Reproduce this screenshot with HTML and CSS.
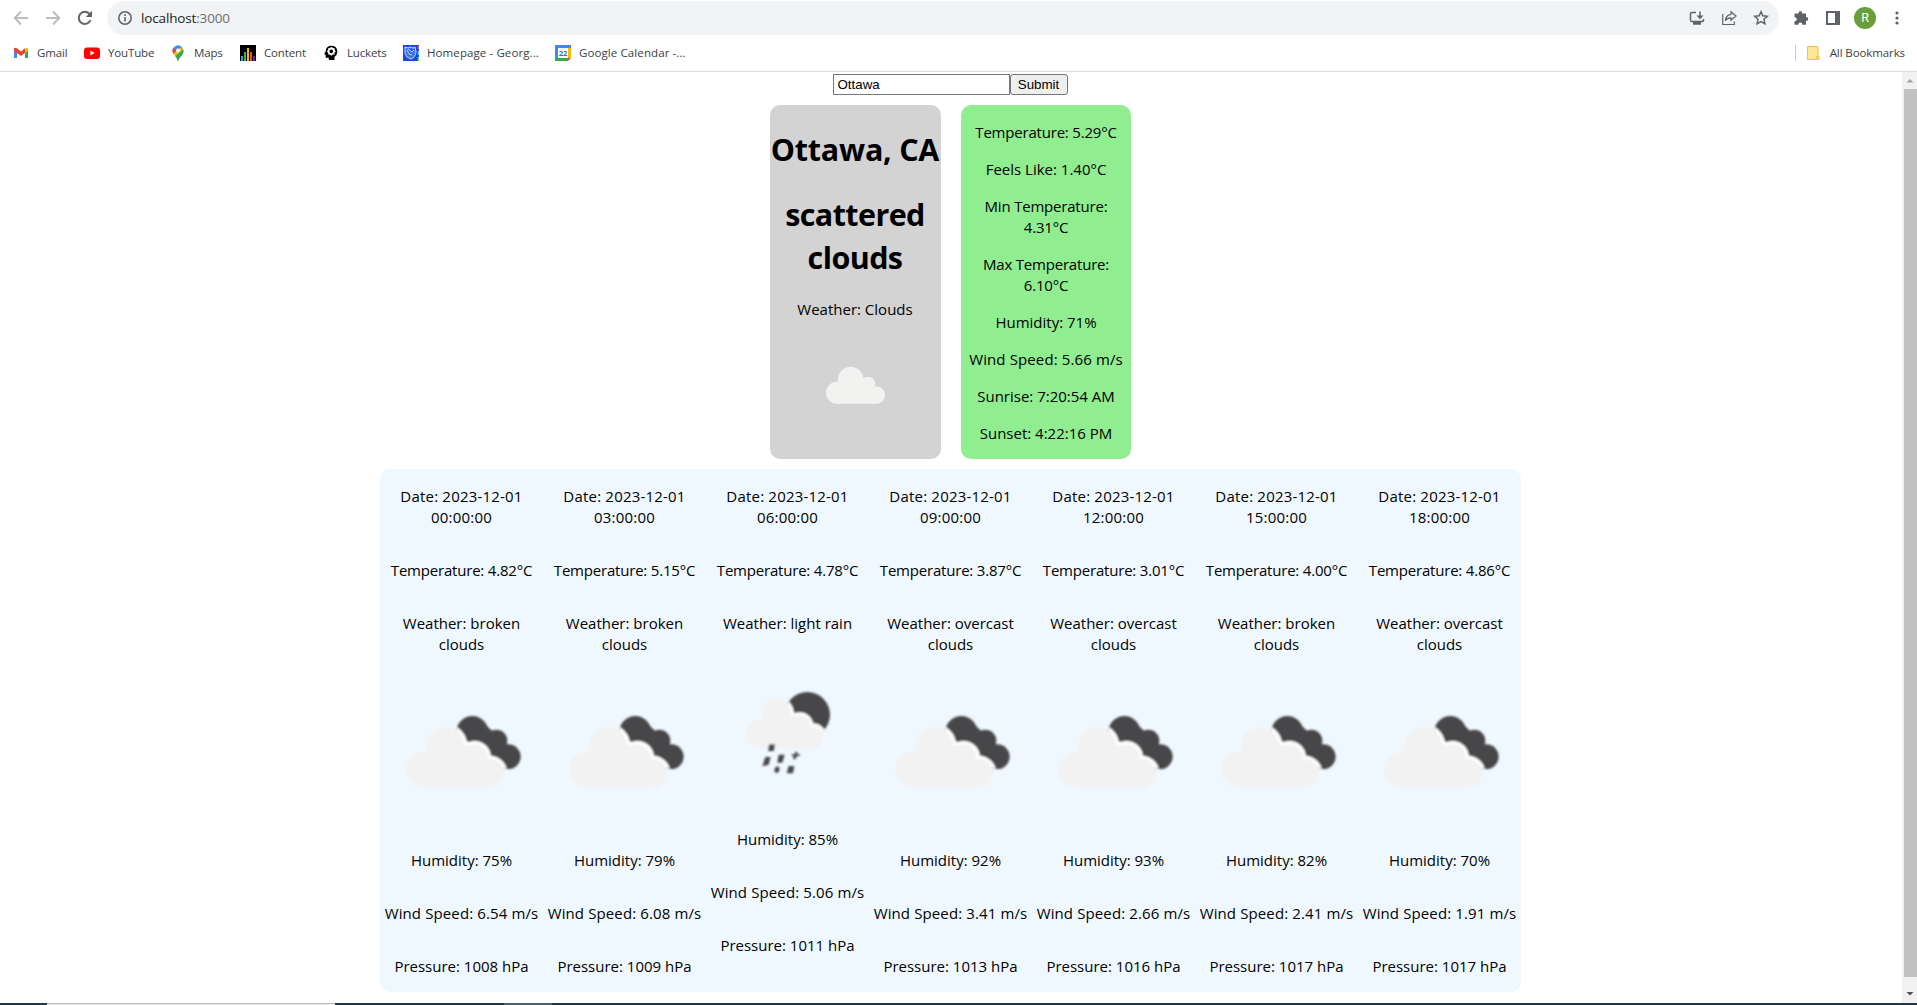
FILE: index.html
```html
<!DOCTYPE html>
<html lang="en">
<head>
<meta charset="utf-8">
<title>Weather</title>
<link rel="stylesheet" href="styles.css">
</head>
<body>
<svg class="defs" width="0" height="0" aria-hidden="true">
  <defs>
    <filter id="soft"><feGaussianBlur stdDeviation="2.800"/></filter>
    <g id="cloud-shape">
      <circle cx="225" cy="255" r="57"/><circle cx="162" cy="326" r="54"/><circle cx="314" cy="289" r="39"/><circle cx="359" cy="337" r="43"/>
      <path d="M162 272 L225 230 L314 260 L359 310 V380 H162Z"/>
    </g>
    <g id="dark-shape">
      <circle cx="307" cy="213" r="48"/><circle cx="379" cy="239" r="33"/><circle cx="415" cy="287" r="37"/>
      <path d="M262 201 L345 190 L420 260 L410 324 L350 296Z"/>
    </g>
    <clipPath id="dark-clip"><circle cx="307" cy="213" r="48"/><circle cx="379" cy="239" r="33"/><circle cx="415" cy="287" r="37"/><path d="M262 201 L345 190 L420 260 L410 324 L350 296Z"/></clipPath>
    <symbol id="broken" viewBox="30 30 489 489">
      <g filter="url(#soft)">
        <use href="#dark-shape" fill="#464648"/>
        <g clip-path="url(#dark-clip)"><use href="#cloud-shape" fill="#fff" stroke="#fff" stroke-width="20"/></g>
        <use href="#cloud-shape" fill="#f2f2f2"/>
      </g>
    </symbol>
    <clipPath id="sun-clip"><path d="M255 80H400V212H375L340 260H250Z"/></clipPath>
    <clipPath id="disc-clip"><circle cx="322" cy="161" r="68"/></clipPath>
    <g id="rain-cloud">
      <circle cx="228" cy="160" r="45"/><circle cx="178" cy="219" r="42"/><circle cx="299" cy="195" r="32"/><circle cx="338" cy="229" r="33"/>
      <path d="M178 177 L228 150 L299 170 L338 210 V262 H178Z"/>
    </g>
    <symbol id="rain" viewBox="18 -33 489 489">
      <g filter="url(#soft)">
        <circle cx="322" cy="161" r="68" fill="#464648" clip-path="url(#sun-clip)"/>
        <g clip-path="url(#disc-clip)"><use href="#rain-cloud" fill="#fff" stroke="#fff" stroke-width="18"/></g>
        <use href="#rain-cloud" fill="#f2f2f2"/>
        <path d="M207 250h18l-3 20h-18zM196 288h16l-6 23-19 5zM236 281h18l-7 24h-15zM286 272h6v8h8v5h-9l-5 10h-6v-10h-5v-5h9zM227 317h11v14l-8 6-8-7zM266 315h17l-4 22h-19z" fill="#46464a"/>
      </g>
    </symbol>
    <symbol id="scattered" viewBox="168 226 300 300">
      <g fill="#f2f2f0"><circle cx="302" cy="359" r="38"/><circle cx="261" cy="399" r="33"/><circle cx="354" cy="373" r="22"/><circle cx="379" cy="406" r="26"/><path d="M261 366H300L354 360L379 385V432H261Z"/></g>
    </symbol>
  </defs>
</svg>

<header class="browser">
  <div class="toolbar">
    <svg class="nav" viewBox="0 0 16 16"><path d="M15 8H2M8 1.500L1.700 8 8 14.500" fill="none" stroke="#babcbe" stroke-width="1.900"/></svg>
    <svg class="nav" viewBox="0 0 16 16"><path d="M1 8H14M8 1.500L14.300 8 8 14.500" fill="none" stroke="#babcbe" stroke-width="1.900"/></svg>
    <svg class="nav" viewBox="0 0 16 16"><path d="M13.500 10.200A6.100 6.100 0 1 1 12.300 3.700" fill="none" stroke="#5f6368" stroke-width="2"/><path d="M15 .8V7H8.800Z" fill="#5f6368"/></svg>
    <div class="address">
      <svg width="14" height="14" viewBox="0 0 14 14"><circle cx="7" cy="7" r="6.200" fill="none" stroke="#5f6368" stroke-width="1.500"/><path d="M7 6v4.600M7 3.300v1.600" stroke="#5f6368" stroke-width="1.600"/></svg>
      <span class="url">localhost<i>:3000</i></span>
      <span class="address-icons">
        <svg viewBox="0 0 16 16"><path d="M7 2.500H2.800Q1.500 2.500 1.500 4v6.200Q1.500 11.500 3 11.500h10.300Q14.500 11.500 14.500 10V9" fill="none" stroke="#5f6368" stroke-width="1.500"/><path d="M4 12h8v2.800H4zM10.300 1.500h1.500v4h2.700L11 9.300 7.500 5.500h2.800z" fill="#5f6368"/></svg>
        <svg viewBox="0 0 16 16"><path d="M1.700 4v10.500h11.600V11.500M10 1.800L15 6l-5 4.200V7.800Q6 7.700 4.300 10.700 5 5 10 4.300z" fill="none" stroke="#5f6368" stroke-width="1.200"/></svg>
        <svg viewBox="0 0 16 16"><path d="M8 1.800l1.800 4 4.500.5-3.300 3 .9 4.500L8 11.500l-3.900 2.300.9-4.500-3.300-3 4.500-.5z" fill="none" stroke="#5f6368" stroke-width="1.500"/></svg>
      </span>
    </div>
    <div class="actions">
      <svg viewBox="0 0 16 16" width="16" height="16"><path d="M2 3.500h3.500Q5.300 1 7.300 1t1.900 2.500H13V7q2.300 0 2.300 2T13 11v3.800H9.400Q9.400 12.500 7.400 12.500t-2 2.300H1.500V11.200q2.300-.1 2.300-2T1.500 7.200V3.500z" fill="#5f6368"/></svg>
      <svg viewBox="0 0 14 14" width="14" height="14"><path d="M0 0h14v14H0zM2 2v10h7V2z" fill="#5f6368" fill-rule="evenodd"/></svg>
      <span class="avatar">R</span>
      <svg class="menu" viewBox="0 0 4 14" width="4" height="14" fill="#5f6368"><circle cx="2" cy="2" r="1.600"/><circle cx="2" cy="7" r="1.600"/><circle cx="2" cy="12" r="1.600"/></svg>
    </div>
  </div>
  <nav class="bookmarks">
    <a class="gmail"><svg viewBox="0 0 16 16"><path d="M1 3v10h3V6z" fill="#4285f4"/><path d="M12 6v7h3V3z" fill="#34a853"/><path d="M12 3.500L14 2.500l1 1V6l-3 2z" fill="#fbbc04"/><path d="M1 3.300Q2 2 4 3.300l4 3.200 4-3.200V8l-4 3-4-3-3-2z" fill="#ea4335"/></svg><span>Gmail</span></a>
    <a class="youtube"><svg viewBox="0 0 16 16"><rect y="2.500" width="16" height="11.500" rx="3" fill="#f00"/><path d="M6.400 5.600v5L10.800 8.100z" fill="#fff"/></svg><span>YouTube</span></a>
    <a class="maps"><svg viewBox="0 0 16 16"><path d="M3.700 8.800L8 5.500l4.900-1.600Q14.500 7 12 10 9 13 8 16q-.7-2.700-2.600-4.700z" fill="#34a853"/><path d="M2.800 3.300L5.800.9Q10-1 12.700 3.500L8 9z" fill="#4285f4"/><path d="M2.800 3.100L6.500 6 3.500 9Q1.500 6 2.800 3.100z" fill="#ea4335"/><path d="M3.500 9L10 2.500l3 2.300-7.500 6.700z" fill="#fbbc04"/><path d="M9 8l4.300-3.500Q14 8 11.500 10.500 8.800 13 8 16q-.7-2.700-2.600-4.700z" fill="#34a853"/><circle cx="8" cy="5.600" r="2" fill="#fff"/></svg><span>Maps</span></a>
    <a class="content"><svg viewBox="0 0 16 16"><path d="M0 0h16v16H0z"/><path d="M1 11h2v5H1z" fill="#18a6e8"/><path d="M4 7h2v9H4z" fill="#5cab2d"/><path d="M7 3h2v13H7z" fill="#f2b90c"/><path d="M10 7h2v9h-2z" fill="#e8542a"/><path d="M13 11h2v5h-2z" fill="#6e2a8d"/></svg><span>Content</span></a>
    <a class="luckets"><svg viewBox="0 0 16 16"><path d="M8.500.7C13 .7 14.500 4 14.300 7q-.2 3-2.800 5v3H5.800v-2.300H2.700V9.900L1.200 9l1.500-2.800Q3 .7 8.500.7z"/><circle cx="8.300" cy="6.300" r="2.800" fill="none" stroke="#fff" stroke-width="1.800"/><path d="M8.300 2v1.800M8.300 9v1.700M4 6.300h1.500M11 6.300h1.700M5.300 3.300l1 1M10.400 8.400l1 1M11.300 3.300l-1 1M5.300 9.400l1-1" stroke="#fff"/></svg><span>Luckets</span></a>
    <a class="home"><svg viewBox="0 0 16 16"><path d="M0 0h16v16H0z" fill="#1648e8"/><path d="M2 2l3 1 2-1 3 1 2-1 1 5q-1 6-5 7-5-1-6-6zM4 5l2 4 3 1M5 4l4 3 2-2" fill="#6d9cff" fill-opacity=".45" stroke="#c4dcff"/><path d="M14.700 1H16v3h-1.300z" fill="#f06040"/><path d="M14.700 6H16v4h-1.300z" fill="#56d6d0"/><path d="M14.700 12H16v4h-1.300z" fill="#6ce64b"/></svg><span>Homepage - Georg...</span></a>
    <a class="calendar"><svg viewBox="0 0 16 16"><path d="M0 0h16v16H0z" fill="#4285f4"/><path d="M13 3h3v10h-3z" fill="#fbbc04"/><path d="M0 13h13v3H0z" fill="#34a853"/><path d="M13 13h3l-3 3z" fill="#ea4335"/><path d="M16 13v3h-3z" fill="#fff"/><path d="M3 3h10v10H3z" fill="#fff"/><text x="8" y="10.800" text-anchor="middle" class="cal-day">22</text></svg><span>Google Calendar -...</span></a>
    <a class="all"><svg viewBox="0 0 16 16"><path d="M1.500 1.500h10.500v9.500h1v3.500H1.500z" fill="#ffe793" stroke="#edc348"/><path d="M10.500 14.500v-3h2v3z" fill="#ffe793" stroke="#edc348" stroke-width=".8"/></svg><span>All Bookmarks</span></a>
  </nav>
</header>

<div class="viewport">
  <main class="page">
    <form class="search"><input type="text" value="Ottawa"><button type="button">Submit</button></form>
    <section class="current">
      <div class="card summary">
        <h1 class="city">Ottawa, CA</h1>
        <h1>scattered clouds</h1>
        <p>Weather: Clouds</p>
        <svg class="icon-now"><use href="#scattered"/></svg>
      </div>
      <div class="card details">
        <p class="temp">Temperature: 5.29°C</p>
        <p>Feels Like: 1.40°C</p>
        <p class="temp">Min Temperature:<br>4.31°C</p>
        <p class="temp">Max Temperature:<br>6.10°C</p>
        <p>Humidity: 71%</p>
        <p class="wind">Wind Speed: 5.66 m/s</p>
        <p>Sunrise: 7:20:54 AM</p>
        <p>Sunset: 4:22:16 PM</p>
      </div>
    </section>
    <section class="forecast">
      <article><p class="date">Date: 2023-12-01<br>00:00:00</p><p class="temp">Temperature: 4.82°C</p><p>Weather: broken<br>clouds</p><svg><use href="#broken"/></svg><p>Humidity: 75%</p><p class="wind">Wind Speed: 6.54 m/s</p><p>Pressure: 1008 hPa</p></article>
      <article><p class="date">Date: 2023-12-01<br>03:00:00</p><p class="temp">Temperature: 5.15°C</p><p>Weather: broken<br>clouds</p><svg><use href="#broken"/></svg><p>Humidity: 79%</p><p class="wind">Wind Speed: 6.08 m/s</p><p>Pressure: 1009 hPa</p></article>
      <article><p class="date">Date: 2023-12-01<br>06:00:00</p><p class="temp">Temperature: 4.78°C</p><p>Weather: light rain</p><svg><use href="#rain"/></svg><p>Humidity: 85%</p><p class="wind">Wind Speed: 5.06 m/s</p><p>Pressure: 1011 hPa</p></article>
      <article><p class="date">Date: 2023-12-01<br>09:00:00</p><p class="temp">Temperature: 3.87°C</p><p>Weather: overcast<br>clouds</p><svg><use href="#broken"/></svg><p>Humidity: 92%</p><p class="wind">Wind Speed: 3.41 m/s</p><p>Pressure: 1013 hPa</p></article>
      <article><p class="date">Date: 2023-12-01<br>12:00:00</p><p class="temp">Temperature: 3.01°C</p><p>Weather: overcast<br>clouds</p><svg><use href="#broken"/></svg><p>Humidity: 93%</p><p class="wind">Wind Speed: 2.66 m/s</p><p>Pressure: 1016 hPa</p></article>
      <article><p class="date">Date: 2023-12-01<br>15:00:00</p><p class="temp">Temperature: 4.00°C</p><p>Weather: broken<br>clouds</p><svg><use href="#broken"/></svg><p>Humidity: 82%</p><p class="wind">Wind Speed: 2.41 m/s</p><p>Pressure: 1017 hPa</p></article>
      <article><p class="date">Date: 2023-12-01<br>18:00:00</p><p class="temp">Temperature: 4.86°C</p><p>Weather: overcast<br>clouds</p><svg><use href="#broken"/></svg><p>Humidity: 70%</p><p class="wind">Wind Speed: 1.91 m/s</p><p>Pressure: 1017 hPa</p></article>
    </section>
  </main>
  <div class="scrollbar">
    <svg viewBox="0 0 15 17"><path d="M4.500 10.500h7L8 7z" fill="#a3a3a3"/></svg>
    <div class="thumb"></div>
    <svg viewBox="0 0 15 17"><path d="M4.500 7h7L8 10.500z" fill="#505050"/></svg>
  </div>
</div>
<footer class="taskbar"><span class="task-search"></span><span class="task-active"></span></footer>
</body>
</html>
```
FILE: styles.css
```css
* { box-sizing: border-box; }

body {
  margin: 0;
  height: 1005px;
  overflow: hidden;
  display: flex;
  flex-direction: column;
  background: #fff;
  color: #000;
  font-family: "Open Sans", "Noto Sans", sans-serif;
  font-size: 15px;
  line-height: 21px;
}

.defs { position: absolute; }

/* Browser chrome */
.browser {
  height: 72px;
  flex: none;
  border-bottom: 1px solid #dadcdd;
}

.toolbar {
  display: flex;
  align-items: center;
  height: 36px;
  padding: 1px 18px 1px 13px;
}

.nav { width: 16px; height: 16px; margin-right: 16px; }
.nav:nth-child(3) { margin-right: 14px; }

.address {
  flex: none;
  width: 1672px;
  height: 34px;
  display: flex;
  align-items: center;
  gap: 9px;
  padding: 0 10px 0 11px;
  border-radius: 17px;
  background: #f1f3f4;
}

.url { font-size: 13.500px; letter-spacing: -.15px; color: #202124; }
.url i { font-style: normal; color: #6b6f74; }

.address-icons { margin-left: auto; display: flex; gap: 16px; }
.address-icons svg { width: 16px; height: 16px; }

.actions {
  flex: 1;
  display: flex;
  align-items: center;
  gap: 17px;
  padding-left: 14px;
}

.avatar {
  width: 22px;
  height: 22px;
  margin-left: -3px;
  border-radius: 50%;
  background: #689f38;
  color: #fff;
  font: 12.500px/22px Roboto, sans-serif;
  text-align: center;
}

.menu { margin-left: auto; }

.bookmarks {
  display: flex;
  align-items: center;
  height: 33px;
  padding: 0 12px 0 13px;
  font-size: 11.500px;
  letter-spacing: -.15px;
  color: #3c4043;
}

.bookmarks a { display: flex; align-items: center; gap: 8px; flex: none; white-space: nowrap; }
.bookmarks svg { width: 16px; height: 16px; flex: none; }
.gmail { width: 71px; }
.youtube { width: 86px; }
.maps { width: 70px; }
.content { width: 83px; }
.luckets { width: 80px; }
.home { width: 152px; }
.home, .calendar { letter-spacing: .1px; }
.cal-day { font: bold 7.500px "Open Sans", sans-serif; fill: #1a73e8; letter-spacing: 0; }

.bookmarks .all { margin-left: auto; height: 16px; border-left: 1px solid #ccc; padding-left: 10px; letter-spacing: -.1px; }

/* Page */
.viewport { flex: 1; min-height: 0; display: flex; }

.page {
  flex: 1;
  display: flex;
  flex-direction: column;
  align-items: center;
  padding: 2px 2px 0 0;
}

.search { display: flex; height: 21px; }

.search input,
.search button {
  font: 13.333px/15px "Liberation Sans", Arial, sans-serif;
  color: #000;
  height: 21px;
  margin: 0;
}

.search input { width: 177px; border: 1px solid #767676; padding: 0 4px; background: #fff; }
.search button { width: 58px; border: 1px solid #767676; border-radius: 3px; padding: 0; background: #efefef; }

.current { display: flex; gap: 20px; margin: 10px 0; height: 354px; }

.card { border-radius: 10px; overflow: hidden; text-align: center; white-space: nowrap; }
.summary { width: 171px; background: #d3d3d3; }
.details { width: 170px; padding: 1px 0 0 1px; background: #90ee90; }

h1 {
  font-size: 30.500px;
  line-height: 43px;
  letter-spacing: -.6px;
  font-weight: 700;
  margin: 22px 0;
  white-space: normal;
}

.summary .city { margin-top: 23px; letter-spacing: -.25px; }
.summary h1 + p { margin-top: -2px; margin-bottom: 15px; }

p { margin: 16px 0; }

.temp { letter-spacing: -.2px; }
.date { letter-spacing: .2px; }
.wind { letter-spacing: .12px; }

.icon-now { display: block; width: 100px; height: 100px; margin: 0 0 0 36px; }

.forecast {
  display: grid;
  grid-template-columns: repeat(7, 163px);
  height: 523px;
  border-radius: 10px;
  background: #f0f8ff;
  overflow: hidden;
}

.forecast article {
  display: flex;
  flex-direction: column;
  padding-top: 1px;
  text-align: center;
  white-space: nowrap;
}

.forecast p { padding-left: 1px; }

.forecast svg { width: 163px; height: 163px; flex: none; }

.scrollbar { width: 15px; display: flex; flex-direction: column; background: #f1f1f1; }
.scrollbar svg { width: 15px; height: 17px; flex: none; }
.thumb { height: 888px; margin-left: 2px; background: #c1c1c1; }
.scrollbar svg:last-child { margin-top: 8px; }

.taskbar { height: 2px; flex: none; display: flex; background: #213744; }
.task-search { width: 288px; margin-left: 47px; background: #eee; border-top: 1px solid #b9b9b9; }
.task-active { width: 48px; margin-left: 169px; background: #4d626c; }
```
